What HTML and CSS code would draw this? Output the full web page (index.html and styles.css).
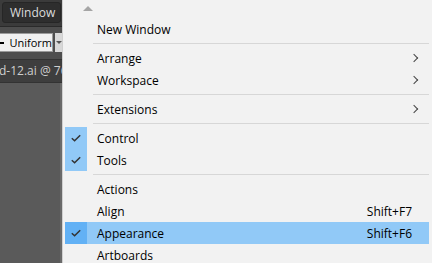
FILE: index.html
```html
<!DOCTYPE html>
<html lang="en">
<head>
    <meta charset="UTF-8">
    <title>Window menu</title>
    <link rel="stylesheet" href="styles.css">
</head>
<body>
    <!-- App chrome behind the menu -->
    <div class="app">
        <div class="menubar">
            <div class="menu-button">Window</div>
        </div>
        <div class="toolbar">
            <div class="stroke-select"><span class="dash"></span>Uniform</div>
            <div class="select-arrow"><span class="down"></span></div>
        </div>
        <div class="doc-tab">d-12.ai @ 76</div>
        <div class="canvas"></div>
    </div>

    <!-- Dropdown -->
    <div class="menu">
        <div class="scroll-up"><span class="tri"></span></div>

        <div class="item"><span class="check"></span><span class="label">New Window</span></div>
        <div class="sep"></div>
        <div class="item"><span class="check"></span><span class="label">Arrange</span><span class="sub"></span></div>
        <div class="item"><span class="check"></span><span class="label">Workspace</span><span class="sub"></span></div>
        <div class="sep"></div>
        <div class="item"><span class="check"></span><span class="label">Extensions</span><span class="sub"></span></div>
        <div class="sep"></div>
        <div class="item checked"><span class="check"><svg viewBox="0 0 10 8"><path d="M0.8 4.2 L3.6 6.8 L9.2 1.2"/></svg></span><span class="label">Control</span></div>
        <div class="item checked"><span class="check"><svg viewBox="0 0 10 8"><path d="M0.8 4.2 L3.6 6.8 L9.2 1.2"/></svg></span><span class="label">Tools</span></div>
        <div class="sep"></div>
        <div class="item"><span class="check"></span><span class="label">Actions</span></div>
        <div class="item"><span class="check"></span><span class="label">Align</span><span class="key">Shift+F7</span></div>
        <div class="item checked active"><span class="check"><svg viewBox="0 0 10 8"><path d="M0.8 4.2 L3.6 6.8 L9.2 1.2"/></svg></span><span class="label">Appearance</span><span class="key">Shift+F6</span></div>
        <div class="item"><span class="check"></span><span class="label">Artboards</span></div>
    </div>
</body>
</html>
```

FILE: styles.css
```css
body {
    margin: 0;
    width: 432px;
    height: 263px;
    overflow: hidden;
    display: flex;
    font-family: 'Open Sans', sans-serif;
    font-size: 12px;
    background: #5a5a5a;
}

/* app chrome */
.app {
    width: 62px;
    display: flex;
    flex-direction: column;
    overflow: hidden;
}

.menubar {
    height: 27px;
    background: #3b3b3b;
    border-bottom: 1px solid #2a2a2a;
    padding: 2px 1px 0 2px;
    box-sizing: border-box;
}

.menu-button {
    height: 21px;
    background: #2e2e2e;
    border: 1px solid #262626;
    border-radius: 3px;
    color: #dcdcdc;
    font-size: 12px;
    line-height: 19px;
    padding-left: 7px;
    box-sizing: border-box;
}

.toolbar {
    height: 33px;
    background: #4e4e4e;
    display: flex;
    align-items: center;
    gap: 2px;
    padding-bottom: 1px;
    box-sizing: border-box;
    border-bottom: 1px solid #333;
}

.stroke-select {
    width: 54px;
    height: 19px;
    margin-left: -1px;
    background: #f0f0f0;
    border: 1px solid #9a9a9a;
    box-sizing: border-box;
    color: #000;
    font-size: 11px;
    display: flex;
    align-items: center;
    gap: 5px;
    flex-shrink: 0;
}

.dash {
    width: 6px;
    height: 2px;
    background: #000;
}

.select-arrow {
    width: 8px;
    height: 19px;
    background: #d8d8d8;
    flex-shrink: 0;
    display: flex;
    align-items: center;
    justify-content: center;
}

.down {
    width: 0;
    height: 0;
    border-left: 3px solid transparent;
    border-right: 3px solid transparent;
    border-top: 3px solid #555;
}

.doc-tab {
    height: 22px;
    background: #3e3e3e;
    color: #cfcfcf;
    font-size: 12px;
    line-height: 22px;
    margin-left: -1px;
    white-space: nowrap;
    border-bottom: 1px solid #333;
}

.canvas {
    flex: 1;
    background: #5a5a5a;
    border-right: 2px solid #6a6a6a;
}

/* menu */
.menu {
    flex: 1;
    background: #f2f2f2;
    border-left: 1px solid #d0d0d0;
    padding: 0 3px 0 2px;
    color: #000;
}

.scroll-up {
    height: 18px;
    display: flex;
    justify-content: center;
    width: 45px;
    padding-top: 6px;
    box-sizing: border-box;
}

.tri {
    width: 0;
    height: 0;
    border-left: 5px solid transparent;
    border-right: 5px solid transparent;
    border-bottom: 5px solid #a5a5a5;
}

.item {
    height: 22px;
    display: flex;
    align-items: center;
}

.check {
    width: 22px;
    height: 22px;
    display: flex;
    align-items: center;
    justify-content: center;
    margin-right: 10px;
}

.check svg {
    width: 10px;
    height: 8px;
    fill: none;
    stroke: #333;
    stroke-width: 1.5;
}

.checked .check {
    background: #91c9f7;
}

.active {
    background: #91c9f7;
}

.active .check {
    background: #62b1f5;
}

.label {
    flex: 1;
}

.key {
    margin-right: 17px;
}

.sub {
    width: 5px;
    height: 5px;
    border-top: 1px solid #444;
    border-right: 1px solid #444;
    transform: rotate(45deg);
    margin-right: 12px;
}

.sep {
    height: 7px;
    margin-left: 28px;
    display: flex;
    align-items: center;
}

.sep::after {
    content: '';
    flex: 1;
    height: 1px;
    background: #d7d7d7;
}
```
